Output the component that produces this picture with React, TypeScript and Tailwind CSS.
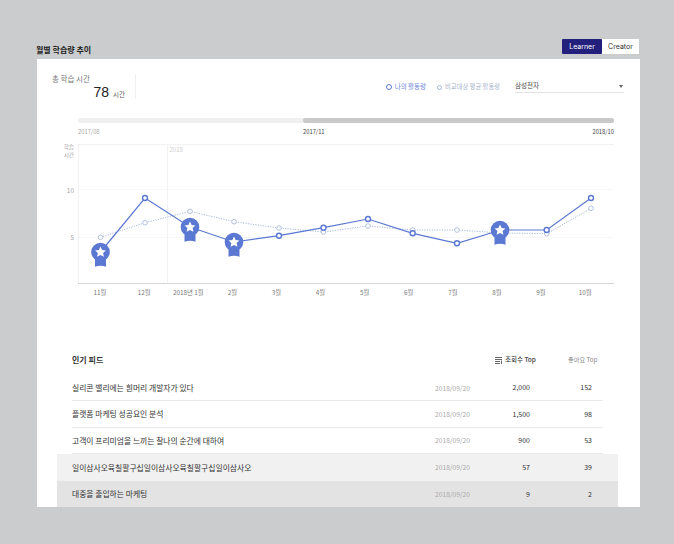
const FONT = '"Noto Sans CJK KR", "Noto Sans", sans-serif';

const xs = [100.5, 145, 190, 234, 279, 323.5, 368, 412.7, 457, 501, 546.7, 591];
const mine = [253, 199, 228, 243, 236.7, 228.7, 220, 234.3, 244.3, 231, 231, 199];
const avg = [238.3, 223.7, 212.3, 222.7, 229, 233, 227, 231, 231, 234, 234.7, 209.3];
const months = ["11월", "12월", "2018년 1월", "2월", "3월", "4월", "5월", "6월", "7월", "8월", "9월", "10월"];
const badges = [0, 2, 3, 9];

const rows = [
  { title: "실리콘 밸리에는 흰머리 개발자가 있다", views: "2,000", likes: "152", bg: "" },
  { title: "플랫폼 마케팅 성공요인 분석", views: "1,500", likes: "98", bg: "" },
  { title: "고객이 프리미엄을 느끼는 찰나의 순간에 대하여", views: "900", likes: "53", bg: "" },
  { title: "일이삼사오육칠팔구십일이삼사오육칠팔구십일이삼사오", views: "57", likes: "39", bg: "bg-[#f1f1f1]" },
  { title: "대중을 출입하는 마케팅", views: "9", likes: "2", bg: "bg-[#e3e3e3]" },
];

function Badge({ x, y }: { x: number; y: number }) {
  return (
    <g transform={`translate(${x} ${y})`}>
      <path d="M-5.5 3 H5.500 V14.800 Q0 12.800 -5.500 14.800 Z" fill="#5b78d2" />
      <circle r="9.300" fill="#5b78d2" />
      <path
        d="M0 -5.400 L1.600 -1.900 L5.400 -1.500 L2.600 1.100 L3.400 4.800 L0 2.900 L-3.400 4.800 L-2.600 1.100 L-5.400 -1.500 L-1.600 -1.900 Z"
        fill="#fff"
      />
    </g>
  );
}

function Chart() {
  const line = (v: number[]) => v.map((y, i) => `${xs[i]},${y}`).join(" ");
  return (
    <svg className="block" width="603" height="165" viewBox="37 140 603 165">
      <g stroke="#f7f7f7" strokeWidth="1">
        <line x1="78" x2="614" y1="190.5" y2="190.5" />
        <line x1="78" x2="614" y1="238.5" y2="238.5" />
      </g>
      <g stroke="#f2f2f2" strokeWidth="1">
        <line x1="78" x2="614" y1="145.5" y2="145.5" />
        <line x1="78.5" x2="78.5" y1="145" y2="284" />
        <line x1="167.5" x2="167.5" y1="145" y2="284" />
      </g>
      <line x1="78" x2="614" y1="284.5" y2="284.5" stroke="#d6d6d6" />
      <g fontSize="5.6" fill="#a5a5a5" textAnchor="end">
        <text x="74" y="149.500">학습</text>
        <text x="74" y="158">시간</text>
      </g>
      <g fontSize="6.5" fill="#a5a5a5" textAnchor="end">
        <text x="74" y="193.500">10</text>
        <text x="74" y="240.500">5</text>
      </g>
      <text x="169.500" y="152.500" fontSize="6" fill="#cfcfcf">2018</text>
      <polyline points={line(avg)} fill="none" stroke="#a9bbdb" strokeWidth="1" strokeDasharray="1.2 1.3" />
      {avg.map((y, i) => (
        <circle key={i} cx={xs[i]} cy={y} r="2.300" fill="#fff" stroke="#b4c2de" strokeWidth="1" />
      ))}
      <polyline points={line(mine)} fill="none" stroke="#5b78d2" strokeWidth="1.200" />
      {mine.map((y, i) =>
        badges.includes(i) ? null : (
          <circle key={i} cx={xs[i]} cy={y} r="2.500" fill="#fff" stroke="#5b78d2" strokeWidth="1.400" />
        ),
      )}
      {badges.map((i) => (
        <Badge key={i} x={i === 9 ? 500 : xs[i]} y={mine[i]} />
      ))}
      <g fontSize="6.3" fill="#777" textAnchor="middle">
        {months.map((m, i) => (
          <text key={m} x={100 + 44.1 * i} y="296">{m}</text>
        ))}
      </g>
    </svg>
  );
}

export default function App() {
  return (
    <div className="w-[674px] h-[544px] overflow-hidden bg-[#cbcccd] pt-[39px] px-[37px]" style={{ fontFamily: FONT }}>
      <div className="flex justify-between items-end h-[20px] w-[603px]">
        <h2 className="text-[8px] font-bold leading-[12px] -ml-[1px] pb-[3px] text-[#222]">월별 학습량 추이</h2>
        <div className="flex h-[15px] mr-[1px] mb-[5px] text-[7px] leading-[15px] text-center">
          <div className="w-[40px] bg-[#231f7c] text-white rounded-[1px]" style={{ fontFamily: "Inter, sans-serif" }}>Learner</div>
          <div className="w-[37px] bg-white text-[#333]" style={{ fontFamily: "Inter, sans-serif" }}>Creator</div>
        </div>
      </div>

      <div className="bg-white w-[603px] h-[448px] pt-[15px] overflow-hidden">
        <div className="flex h-[25px]">
          <div className="ml-[15px] w-[84px] h-[25px] border-r border-[#f0f0f0]">
            <div className="text-[7.5px] leading-[10px] text-[#777]">총 학습 시간</div>
            <div className="flex items-baseline justify-end pr-[10px] -mt-[1px] text-[#222]">
              <span className="text-[14px] leading-[18px]" style={{ fontFamily: '"Liberation Sans", sans-serif' }}>78</span>
              <span className="text-[6.5px] ml-[4px] text-[#555]">시간</span>
            </div>
          </div>
          <div className="flex items-start ml-auto mr-[16px] mt-[6px]">
            <div className="flex items-center h-[14px] text-[6.5px] text-[#6c84d4]">
              <span className="w-[6px] h-[6px] rounded-full border-[1.5px] border-[#5b78d2] mr-[3px]" />
              나의 활동량
            </div>
            <div className="flex items-center h-[14px] ml-[11px] text-[6.3px] text-[#a9b4ca]">
              <span className="w-[5px] h-[5px] rounded-full border border-[#a9b8d4] mr-[3px]" />
              비교대상 평균 활동량
            </div>
            <div className="flex items-center justify-between w-[109px] h-[13px] ml-[15px] border-b border-[#e3e3e3] text-[6.5px] text-[#444]">
              삼성전자
              <span className="w-0 h-0 border-x-[2.5px] border-x-transparent border-t-[3px] border-t-[#666] mr-[1px]" />
            </div>
          </div>
        </div>

        <div className="mt-[19px] mx-[41px] w-[536px] h-[5px] rounded-full bg-[#f0f0f0] flex justify-end">
          <div className="w-[311px] h-[5px] rounded-full bg-[#c9c9c9]" />
        </div>
        <div className="mx-[41px] w-[536px] h-[13px] flex text-[5.8px] leading-[13px] mt-[2px] mb-[1px]">
          <span className="text-[#aaa] w-[225px]">2017/08</span>
          <span className="text-[#444]">2017/11</span>
          <span className="ml-auto text-[#444]">2018/10</span>
        </div>

        <Chart />

        <div className="mt-[44px] pl-[20px] pr-[22px]">
          <div className="flex items-center h-[24px] mx-[15px] text-[#333]">
            <span className="text-[8px] font-bold flex-1">인기 피드</span>
            <span className="flex items-center text-[6.5px] font-medium text-[#444] w-[73px]">
              <svg width="8" height="7" viewBox="0 0 8 7" className="mr-[2px]">
                <path d="M0 .5H7M0 2.500H7M0 4.500H5M0 6.500H5" stroke="#555" strokeWidth=".9" />
                <path d="M6.500 3.500V7" stroke="#555" strokeWidth=".9" />
              </svg>
              조회수 Top
            </span>
            <span className="text-[6.2px] text-[#888] w-[29px] mr-[6px] whitespace-nowrap">좋아요 Top</span>
          </div>
          <div className="mt-[3px]">
            {rows.map((r, i) => (
              <div key={r.title} className={r.bg}>
                <div className={`mx-[15px] w-[531px] flex items-center h-[26.400px] text-[7.800px] text-[#333] ${i < 3 ? "border-b border-[#e9e9e9]" : ""}`}>
                  <span className="flex-1 truncate">{r.title}</span>
                  <span className="w-[70px] text-right text-[6.700px] text-[#aaa]">2018/09/20</span>
                  <span className="w-[60px] text-right text-[7px]">{r.views}</span>
                  <span className="w-[73px] text-right text-[7px] pr-[11px]">{r.likes}</span>
                </div>
              </div>
            ))}
          </div>
        </div>
      </div>
    </div>
  );
}
